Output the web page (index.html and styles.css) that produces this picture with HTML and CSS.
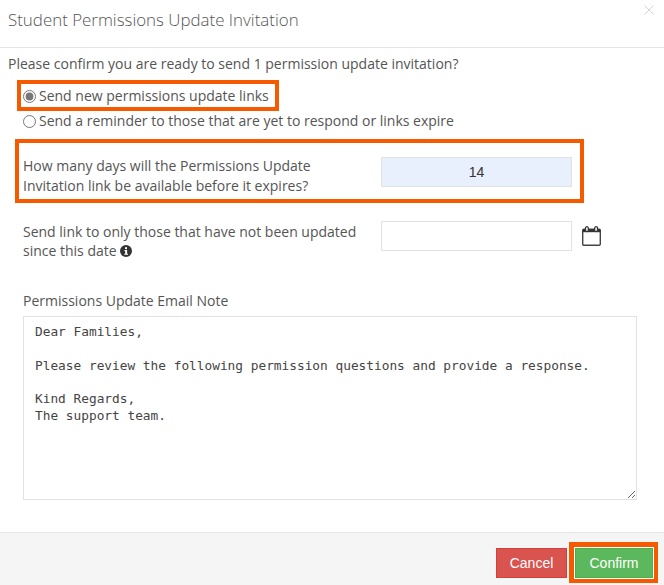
FILE: index.html
```html
<!DOCTYPE html>
<html lang="en">
<head>
  <meta charset="UTF-8" />
  <title>Student Permissions Update Invitation</title>
  <link rel="stylesheet" href="styles.css">
</head>
<body>

  <div class="modal">
    <div class="modal-header">
      <h4>Student Permissions Update Invitation</h4>
      <span class="close-btn">
        <svg width="10" height="10" viewBox="0 0 10 10"><path d="M0.5 0.5L9.5 9.5M9.5 0.5L0.5 9.5" stroke="#d4d4d4" stroke-width="1" fill="none"/></svg>
      </span>
    </div>

    <div class="modal-body">
      <p class="intro">Please confirm you are ready to send 1 permission update invitation?</p>

      <div class="radio-box">
        <label class="radio-row">
          <input type="radio" name="mode" checked>
          <span>Send new permissions update links</span>
        </label>
      </div>
      <label class="radio-row second">
        <input type="radio" name="mode">
        <span>Send a reminder to those that are yet to respond or links expire</span>
      </label>

      <div class="days-box">
        <div class="field-label">How many days will the Permissions Update Invitation link be available before it expires?</div>
        <input class="text-input days-input" type="text" value="14">
      </div>

      <div class="since-row">
        <div class="field-label">
          Send link to only those that have not been updated since this date
          <svg class="info-icon" width="12" height="12" viewBox="0 0 12 12"><circle cx="6" cy="6" r="6" fill="#333"/><rect x="5" y="2.2" width="2" height="1.9" fill="#fff"/><path d="M4.4 5h2.7v3.7h0.9v1H4.2v-1h1V6h-0.8z" fill="#fff"/></svg>
        </div>
        <input class="text-input" type="text">
        <svg class="calendar-icon" width="19" height="20" viewBox="0 0 19 20">
          <rect x="0.7" y="3.2" width="17.6" height="16.1" rx="1.2" fill="none" stroke="#444" stroke-width="1.4"/>
          <rect x="0.7" y="3.2" width="17.6" height="3" fill="#333"/>
          <rect x="3.4" y="0.6" width="3" height="5" rx="1.5" fill="#ddd" stroke="#333" stroke-width="1.1"/>
          <rect x="12.6" y="0.6" width="3" height="5" rx="1.5" fill="#ddd" stroke="#333" stroke-width="1.1"/>
        </svg>
      </div>

      <label class="note-label" for="note">Permissions Update Email Note</label>
      <textarea class="note" id="note">Dear Families,

Please review the following permission questions and provide a response.

Kind Regards,
The support team.</textarea>
    </div>

    <div class="modal-footer">
      <button class="btn btn-cancel">Cancel</button>
      <div class="confirm-box">
        <button class="btn btn-confirm">Confirm</button>
      </div>
    </div>
  </div>

</body>
</html>
```

FILE: styles.css
```css
html, body {
  margin: 0;
  padding: 0;
}

body {
  width: 664px;
  height: 585px;
  overflow: hidden;
  background: #fff;
  font-family: 'Open Sans', sans-serif;
  font-size: 14px;
  line-height: 20px;
  color: #555;
}

.modal {
  display: flex;
  flex-direction: column;
  height: 585px;
}

.modal-header {
  display: flex;
  justify-content: space-between;
  height: 47px;
  padding: 0 10px 0 8px;
  border-bottom: 1px solid #e5e5e5;
}

.modal-header h4 {
  margin: 8px 0 0;
  font-size: 16.9px;
  font-weight: 300;
  line-height: 24px;
  color: #555;
}

.close-btn {
  margin-top: 5px;
  height: 10px;
  line-height: 0;
}

.modal-body {
  flex: 1;
  padding: 0 27px 0 8px;
}

.intro {
  margin: 6px 0 0;
}

.radio-box {
  display: inline-block;
  margin: 6px 0 0 9px;
  padding: 2px 6px 1px 2px;
  border: 4px solid #f55a00;
}

.radio-row {
  display: flex;
  align-items: center;
  height: 20px;
  white-space: nowrap;
}

.radio-row input {
  width: 13px;
  height: 13px;
  margin: 0 3px 0 0;
  accent-color: #777;
}

.radio-row.second {
  margin: 0 0 0 15px;
}

.days-box {
  display: flex;
  align-items: flex-start;
  justify-content: space-between;
  width: 553px;
  height: 56px;
  margin: 8px 0 0 7px;
  padding: 0 8px 0 0;
  border: 4px solid #f55a00;
}

.field-label {
  width: 340px;
}

.days-box .field-label {
  margin-top: 13px;
  padding-left: 4px;
}

.text-input {
  width: 191px;
  height: 30px;
  box-sizing: border-box;
  border: 1px solid #e2e2e2;
  background: #fff;
  padding: 0 6px;
  font-family: 'Liberation Sans', sans-serif;
  font-size: 14px;
  color: #333;
  text-align: center;
}

.days-input {
  margin-top: 14px;
  background: #e8f0fe;
}

.since-row {
  display: flex;
  align-items: flex-start;
  margin: 18px 0 0 15px;
}

.since-row .field-label {
  width: 358px;
  margin-top: 1px;
  padding-right: 8px;
  box-sizing: border-box;
  line-height: 19px;
}

.info-icon {
  vertical-align: -1px;
}

.calendar-icon {
  margin: 5px 0 0 10px;
}

.note-label {
  display: block;
  margin: 31px 0 0 15px;
}

.note {
  display: block;
  width: 614px;
  height: 184px;
  box-sizing: border-box;
  margin: 5px 0 0 15px;
  padding: 7px 11px;
  border: 1px solid #e2e2e2;
  background: #fff;
  font-family: 'DejaVu Sans Mono', monospace;
  font-size: 12.8px;
  line-height: 16.8px;
  color: #444;
  outline: none;
}

.modal-footer {
  display: flex;
  justify-content: flex-end;
  align-items: flex-start;
  height: 53px;
  padding: 9px 6px 0 0;
  box-sizing: border-box;
  background: #f5f5f5;
  border-top: 1px solid #e5e5e5;
}

.btn {
  display: block;
  height: 30px;
  padding: 0;
  border-radius: 0;
  font-family: 'Liberation Sans', sans-serif;
  font-size: 14px;
  color: #fff;
}

.btn-cancel {
  width: 71px;
  margin: 6px 2px 0 0;
  background: #d9534f;
  border: 1px solid #d43f3a;
}

.confirm-box {
  padding: 1px;
  background: #fff;
  border-style: solid;
  border-color: #f55a00;
  border-width: 5px 4px 4px 5px;
}

.btn-confirm {
  width: 78px;
  background: #5cb85c;
  border: 1px solid #4cae4c;
}
```
